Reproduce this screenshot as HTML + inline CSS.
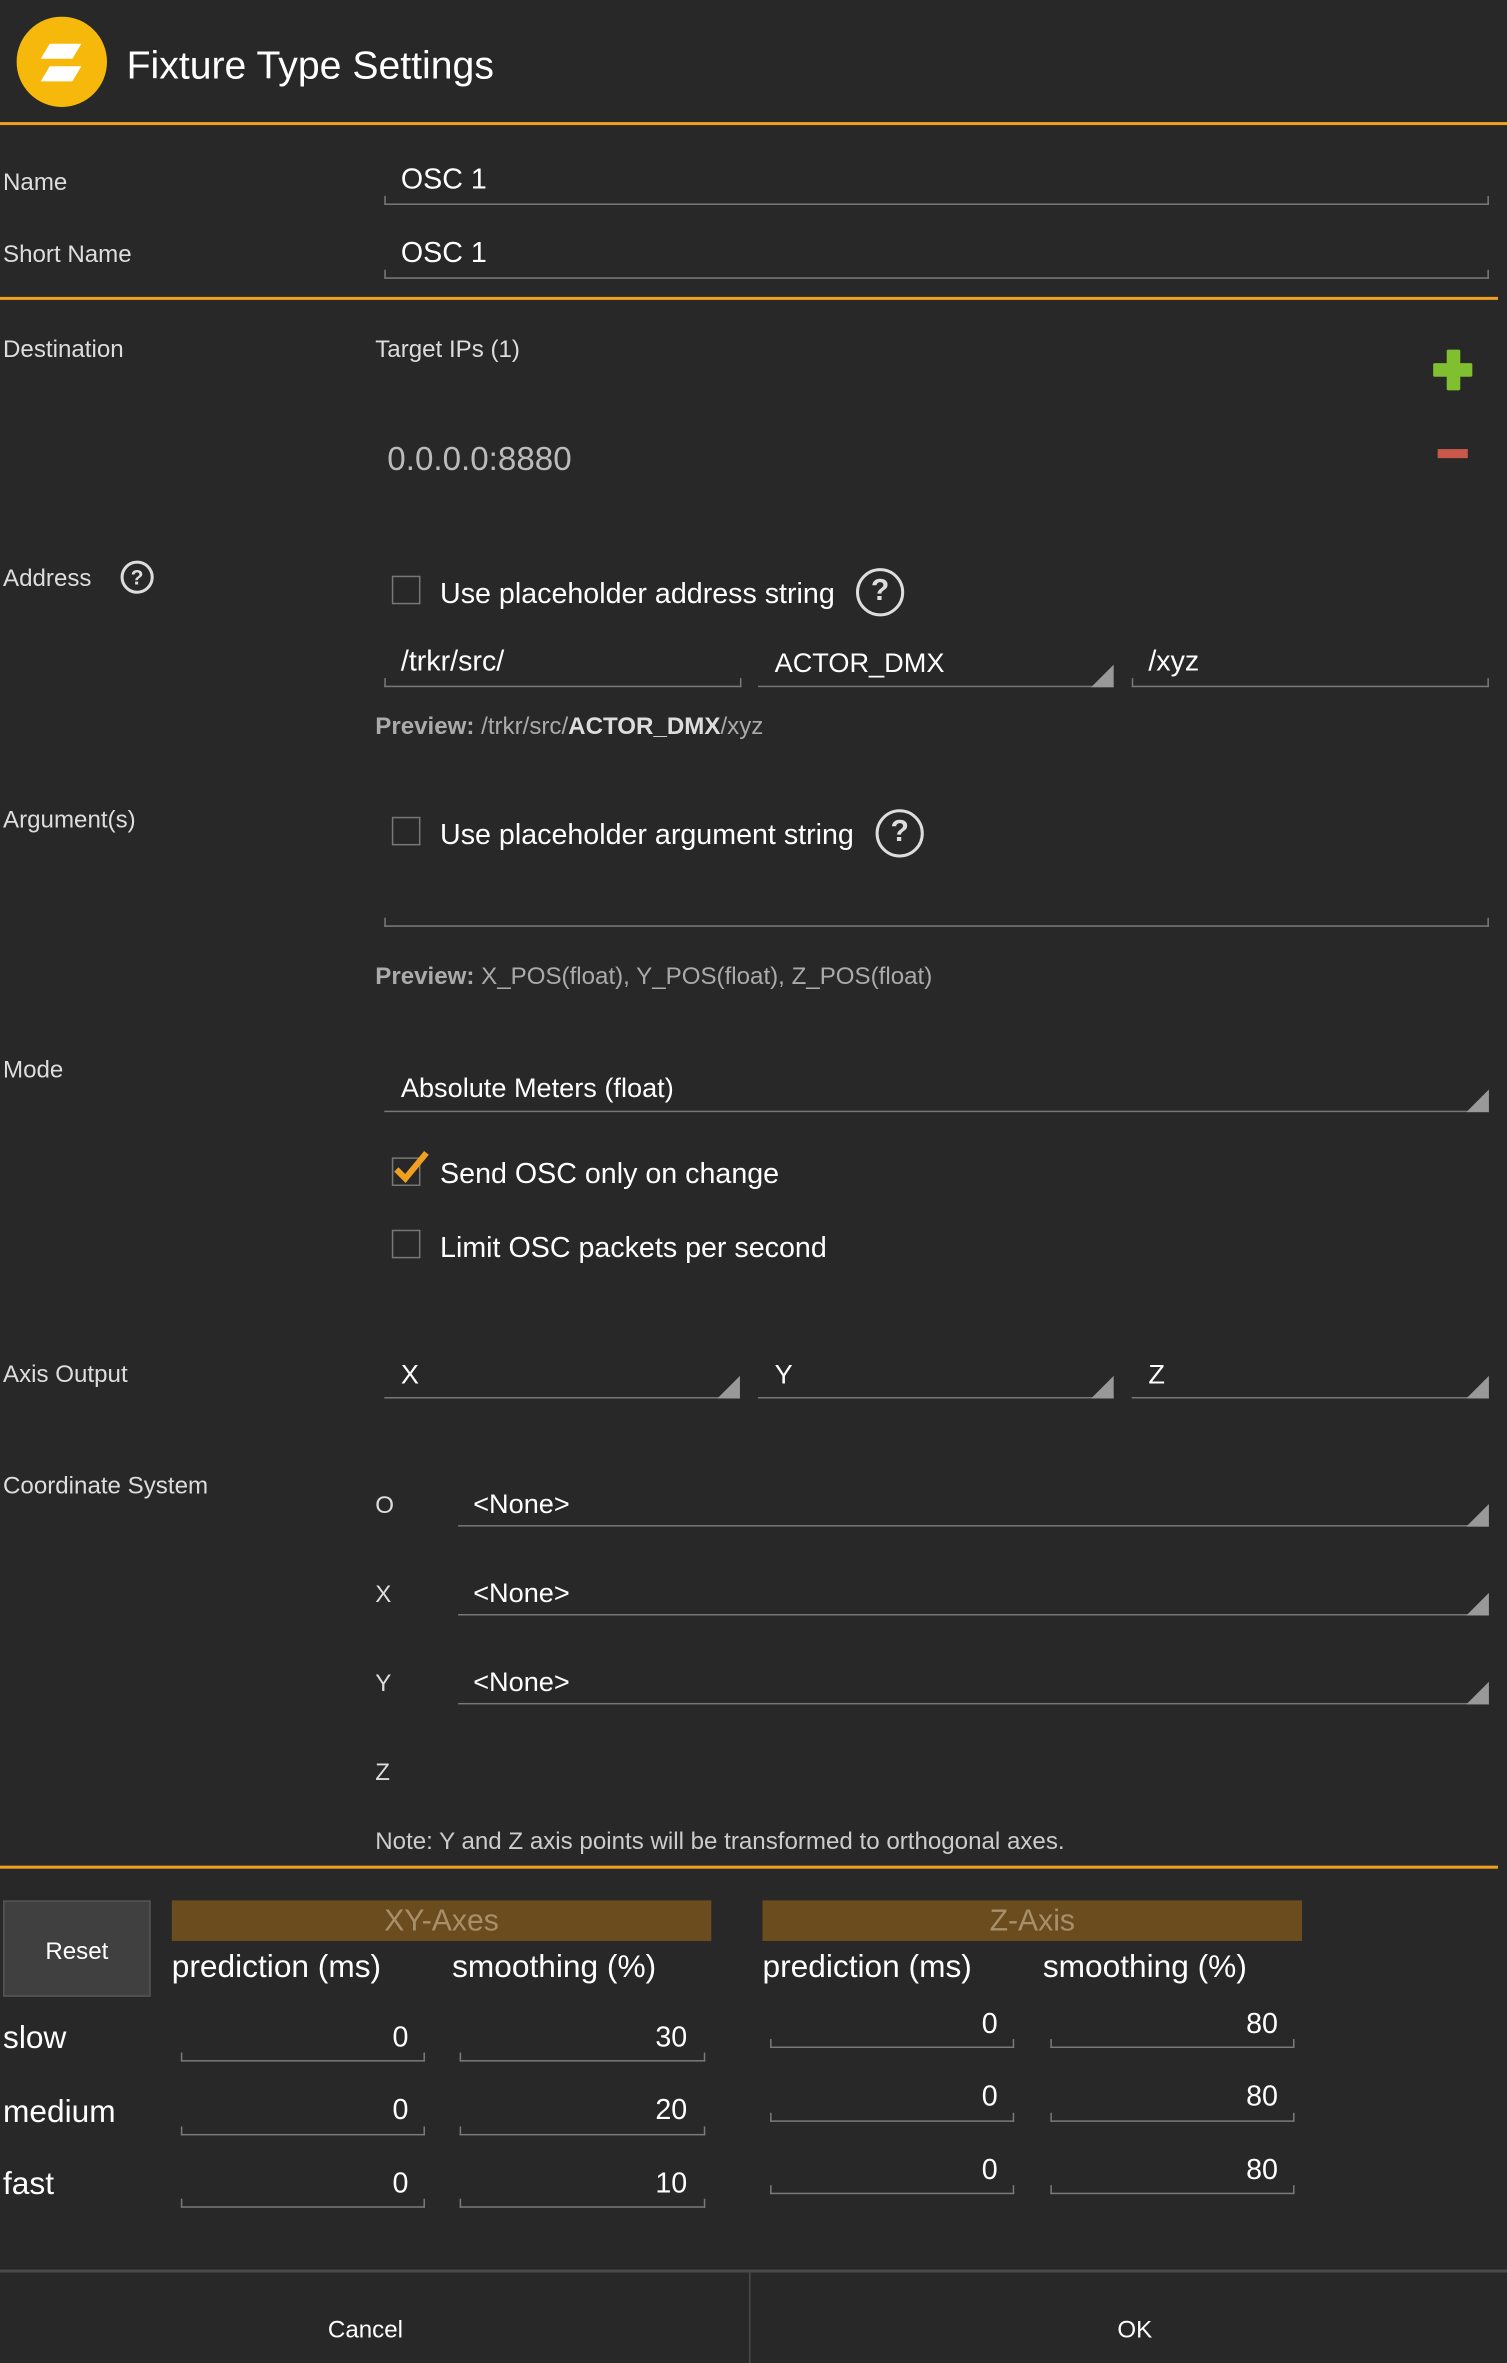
<!DOCTYPE html>
<html><head><meta charset="utf-8"><style>
html,body{margin:0;padding:0;background:#282828;width:1507px;height:2362px;overflow:hidden}
#w{position:absolute;left:0;top:0;width:1000px;height:1568px;transform:scale(1.507);transform-origin:0 0;font-family:"Liberation Sans",sans-serif;color:#eee}
.t{position:absolute;line-height:1;white-space:nowrap;margin-top:1.5px}
.l{font-size:16px;color:#ddd}
.v{font-size:19px;color:#fff}
.f{position:absolute;height:5px;border:1.3px solid #7a7a7a;border-top:none}
.d{position:absolute;height:1px;background:#777}
.d:after{content:"";position:absolute;right:0;bottom:0;border-left:15px solid transparent;border-bottom:15px solid #999}
.cb{position:absolute;width:19px;height:19px;border:1.5px solid #777;box-sizing:border-box}
.q{position:absolute;border:2.3px solid #ddd;border-radius:50%;box-sizing:border-box;text-align:center;color:#ddd;font-weight:bold}
.o{position:absolute;left:0;height:1.5px;background:#f0a020}
</style></head><body><div id="w">
<svg style="position:absolute;left:11px;top:11px" width="60" height="60" viewBox="0 0 60 60"><circle cx="30" cy="30" r="30" fill="#f6b90b"/><polygon points="22,18 43,18 37,28 16,28" fill="#fff"/><polygon points="22,33 43,33 37,43 16,43" fill="#fff"/></svg>
<div class="t" style="left:84px;top:28px;font-size:26px;color:#fff">Fixture Type Settings</div>
<div class="o" style="top:81px;width:1000px;height:2px"></div>

<div class="t l" style="left:2px;top:112px">Name</div>
<div class="t v" style="left:266px;top:108px">OSC 1</div>
<div class="f" style="left:255px;top:130px;width:731px"></div>
<div class="t l" style="left:2px;top:160px">Short Name</div>
<div class="t v" style="left:266px;top:157px">OSC 1</div>
<div class="f" style="left:255px;top:179px;width:731px"></div>
<div class="o" style="top:197px;width:994px"></div>

<div class="t l" style="left:2px;top:223px">Destination</div>
<div class="t l" style="left:249px;top:223px">Target IPs (1)</div>
<div style="position:absolute;left:960px;top:232px;width:9px;height:27px;background:#7fbf30;border-radius:1px"></div>
<div style="position:absolute;left:951px;top:241px;width:26px;height:9px;background:#7fbf30;border-radius:1px"></div>
<div style="position:absolute;left:954px;top:298px;width:20px;height:6px;background:#c8584a"></div>
<div class="t" style="left:257px;top:292px;font-size:22px;color:#bbb">0.0.0.0:8880</div>

<div class="t l" style="left:2px;top:375px">Address</div>
<div class="q" style="left:80px;top:372px;width:22px;height:22px;font-size:14px;line-height:18px">?</div>
<div class="cb" style="left:260px;top:382px"></div>
<div class="t v" style="left:292px;top:383px">Use placeholder address string</div>
<div class="q" style="left:568px;top:377px;width:32px;height:32px;font-size:20px;line-height:27px">?</div>
<div class="t v" style="left:266px;top:428px">/trkr/src/</div>
<div class="f" style="left:255px;top:450px;width:235px"></div>
<div class="t" style="left:514px;top:429px;font-size:18px;color:#fff">ACTOR_DMX</div>
<div class="d" style="left:503px;top:455px;width:236px"></div>
<div class="t v" style="left:762px;top:428px">/xyz</div>
<div class="f" style="left:751px;top:450px;width:235px"></div>
<div class="t" style="left:249px;top:473px;font-size:16px;color:#aaa"><b>Preview:</b> /trkr/src/<b style="color:#ddd">ACTOR_DMX</b>/xyz</div>

<div class="t l" style="left:2px;top:535px">Argument(s)</div>
<div class="cb" style="left:260px;top:542px"></div>
<div class="t v" style="left:292px;top:543px">Use placeholder argument string</div>
<div class="q" style="left:581px;top:537px;width:32px;height:32px;font-size:20px;line-height:27px">?</div>
<div class="f" style="left:255px;top:609px;width:731px"></div>
<div class="t" style="left:249px;top:639px;font-size:16px;color:#aaa"><b>Preview:</b> X_POS(float), Y_POS(float), Z_POS(float)</div>

<div class="t l" style="left:2px;top:701px">Mode</div>
<div class="t" style="left:266px;top:711px;font-size:18px;color:#fff">Absolute Meters (float)</div>
<div class="d" style="left:255px;top:737px;width:733px"></div>
<div class="cb" style="left:260px;top:768px"></div>
<svg style="position:absolute;left:259px;top:762px" width="28" height="24" viewBox="0 0 28 24"><path d="M4 14 L10 20 L24 3" fill="none" stroke="#f0a020" stroke-width="4"/></svg>
<div class="t v" style="left:292px;top:768px">Send OSC only on change</div>
<div class="cb" style="left:260px;top:816px"></div>
<div class="t v" style="left:292px;top:817px">Limit OSC packets per second</div>

<div class="t l" style="left:2px;top:903px">Axis Output</div>
<div class="t" style="left:266px;top:901px;font-size:18px;color:#fff">X</div>
<div class="d" style="left:255px;top:927px;width:236px"></div>
<div class="t" style="left:514px;top:901px;font-size:18px;color:#fff">Y</div>
<div class="d" style="left:503px;top:927px;width:236px"></div>
<div class="t" style="left:762px;top:901px;font-size:18px;color:#fff">Z</div>
<div class="d" style="left:751px;top:927px;width:237px"></div>

<div class="t l" style="left:2px;top:977px">Coordinate System</div>
<div class="t l" style="left:249px;top:990px">O</div>
<div class="t" style="left:314px;top:987px;font-size:18px;color:#fff">&lt;None&gt;</div>
<div class="d" style="left:304px;top:1012px;width:684px"></div>
<div class="t l" style="left:249px;top:1049px">X</div>
<div class="t" style="left:314px;top:1046px;font-size:18px;color:#fff">&lt;None&gt;</div>
<div class="d" style="left:304px;top:1071px;width:684px"></div>
<div class="t l" style="left:249px;top:1108px">Y</div>
<div class="t" style="left:314px;top:1105px;font-size:18px;color:#fff">&lt;None&gt;</div>
<div class="d" style="left:304px;top:1130px;width:684px"></div>
<div class="t l" style="left:249px;top:1167px">Z</div>
<div class="t" style="left:249px;top:1213px;font-size:16px;color:#ccc">Note: Y and Z axis points will be transformed to orthogonal axes.</div>
<div class="o" style="top:1238px;width:994px"></div>

<div style="position:absolute;left:2px;top:1261px;width:98px;height:64px;background:#404040;border:1px solid #555;box-sizing:border-box"></div>
<div class="t" style="left:2px;top:1286px;width:98px;text-align:center;font-size:16px;color:#fff">Reset</div>
<div class="t" style="left:114px;top:1261px;width:358px;height:27px;background:#6a4c1e;color:#a88f6a;font-size:20px;text-align:center;line-height:28px;margin-top:0">XY-Axes</div>
<div class="t" style="left:506px;top:1261px;width:358px;height:27px;background:#6a4c1e;color:#a88f6a;font-size:20px;text-align:center;line-height:28px;margin-top:0">Z-Axis</div>
<div class="t" style="left:114px;top:1293px;font-size:21px;color:#fff">prediction (ms)</div>
<div class="t" style="left:300px;top:1293px;font-size:21px;color:#fff">smoothing (%)</div>
<div class="t" style="left:506px;top:1293px;font-size:21px;color:#fff">prediction (ms)</div>
<div class="t" style="left:692px;top:1293px;font-size:21px;color:#fff">smoothing (%)</div>

<div class="t" style="left:2px;top:1340px;font-size:21px;color:#fff">slow</div>
<div class="t" style="left:2px;top:1389px;font-size:21px;color:#fff">medium</div>
<div class="t" style="left:2px;top:1437px;font-size:21px;color:#fff">fast</div>

<div class="t v" style="left:120px;top:1341px;width:151px;text-align:right">0</div>
<div class="f" style="left:120px;top:1362px;width:160px"></div>
<div class="t v" style="left:305px;top:1341px;width:151px;text-align:right">30</div>
<div class="f" style="left:305px;top:1362px;width:161px"></div>
<div class="t v" style="left:120px;top:1389px;width:151px;text-align:right">0</div>
<div class="f" style="left:120px;top:1411px;width:160px"></div>
<div class="t v" style="left:305px;top:1389px;width:151px;text-align:right">20</div>
<div class="f" style="left:305px;top:1411px;width:161px"></div>
<div class="t v" style="left:120px;top:1438px;width:151px;text-align:right">0</div>
<div class="f" style="left:120px;top:1459px;width:160px"></div>
<div class="t v" style="left:305px;top:1438px;width:151px;text-align:right">10</div>
<div class="f" style="left:305px;top:1459px;width:161px"></div>

<div class="t v" style="left:511px;top:1332px;width:151px;text-align:right">0</div>
<div class="f" style="left:511px;top:1353px;width:160px"></div>
<div class="t v" style="left:697px;top:1332px;width:151px;text-align:right">80</div>
<div class="f" style="left:697px;top:1353px;width:160px"></div>
<div class="t v" style="left:511px;top:1380px;width:151px;text-align:right">0</div>
<div class="f" style="left:511px;top:1402px;width:160px"></div>
<div class="t v" style="left:697px;top:1380px;width:151px;text-align:right">80</div>
<div class="f" style="left:697px;top:1402px;width:160px"></div>
<div class="t v" style="left:511px;top:1429px;width:151px;text-align:right">0</div>
<div class="f" style="left:511px;top:1450px;width:160px"></div>
<div class="t v" style="left:697px;top:1429px;width:151px;text-align:right">80</div>
<div class="f" style="left:697px;top:1450px;width:160px"></div>

<div style="position:absolute;left:0;top:1506px;width:1000px;height:2px;background:#4a4a4a"></div>
<div style="position:absolute;left:497px;top:1508px;width:1px;height:60px;background:#4a4a4a"></div>
<div class="t" style="left:-6px;top:1537px;width:497px;text-align:center;font-size:16px;color:#fff">Cancel</div>
<div class="t" style="left:502px;top:1537px;width:502px;text-align:center;font-size:16px;color:#fff">OK</div>
</div></body></html>
